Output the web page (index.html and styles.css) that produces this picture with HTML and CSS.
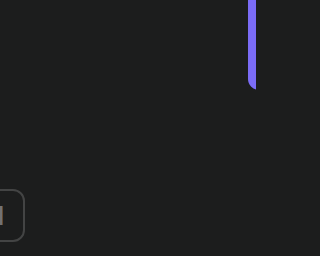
FILE: index.html
```html
<!DOCTYPE html>
<html>
<head>
<meta charset="utf-8">
<link rel="stylesheet" href="styles.css">
</head>
<body>
<div class="screen">
  <div class="top-row">
    <div class="accent-panel"></div>
  </div>
  <div class="bottom-row">
    <div class="key-box"><span class="key-label">H</span></div>
  </div>
</div>
</body>
</html>
```
FILE: styles.css
```css
html, body {
  margin: 0;
  padding: 0;
  background: #1c1d1d;
}
.screen {
  width: 256px;
  height: 256px;
  overflow: hidden;
  display: flex;
  flex-direction: column;
  background: #1c1d1d;
  font-family: "Inter", "Liberation Sans", sans-serif;
}
.top-row {
  display: flex;
  justify-content: flex-end;
  height: 189px;
}
.accent-panel {
  width: 40px;
  height: 90px;
  margin-right: -32px;
  background: #7b6cf6;
  border-radius: 0 0 0 11px;
}
.bottom-row {
  display: flex;
}
.key-box {
  width: 55px;
  height: 53px;
  margin-left: -30px;
  box-sizing: border-box;
  border: 2px solid #434444;
  border-radius: 12px;
  display: flex;
  align-items: center;
  justify-content: flex-start;
  padding-left: 13px;
}
.key-label {
  color: #727272;
  font-size: 26px;
  font-weight: 600;
  line-height: 1;
}
```
